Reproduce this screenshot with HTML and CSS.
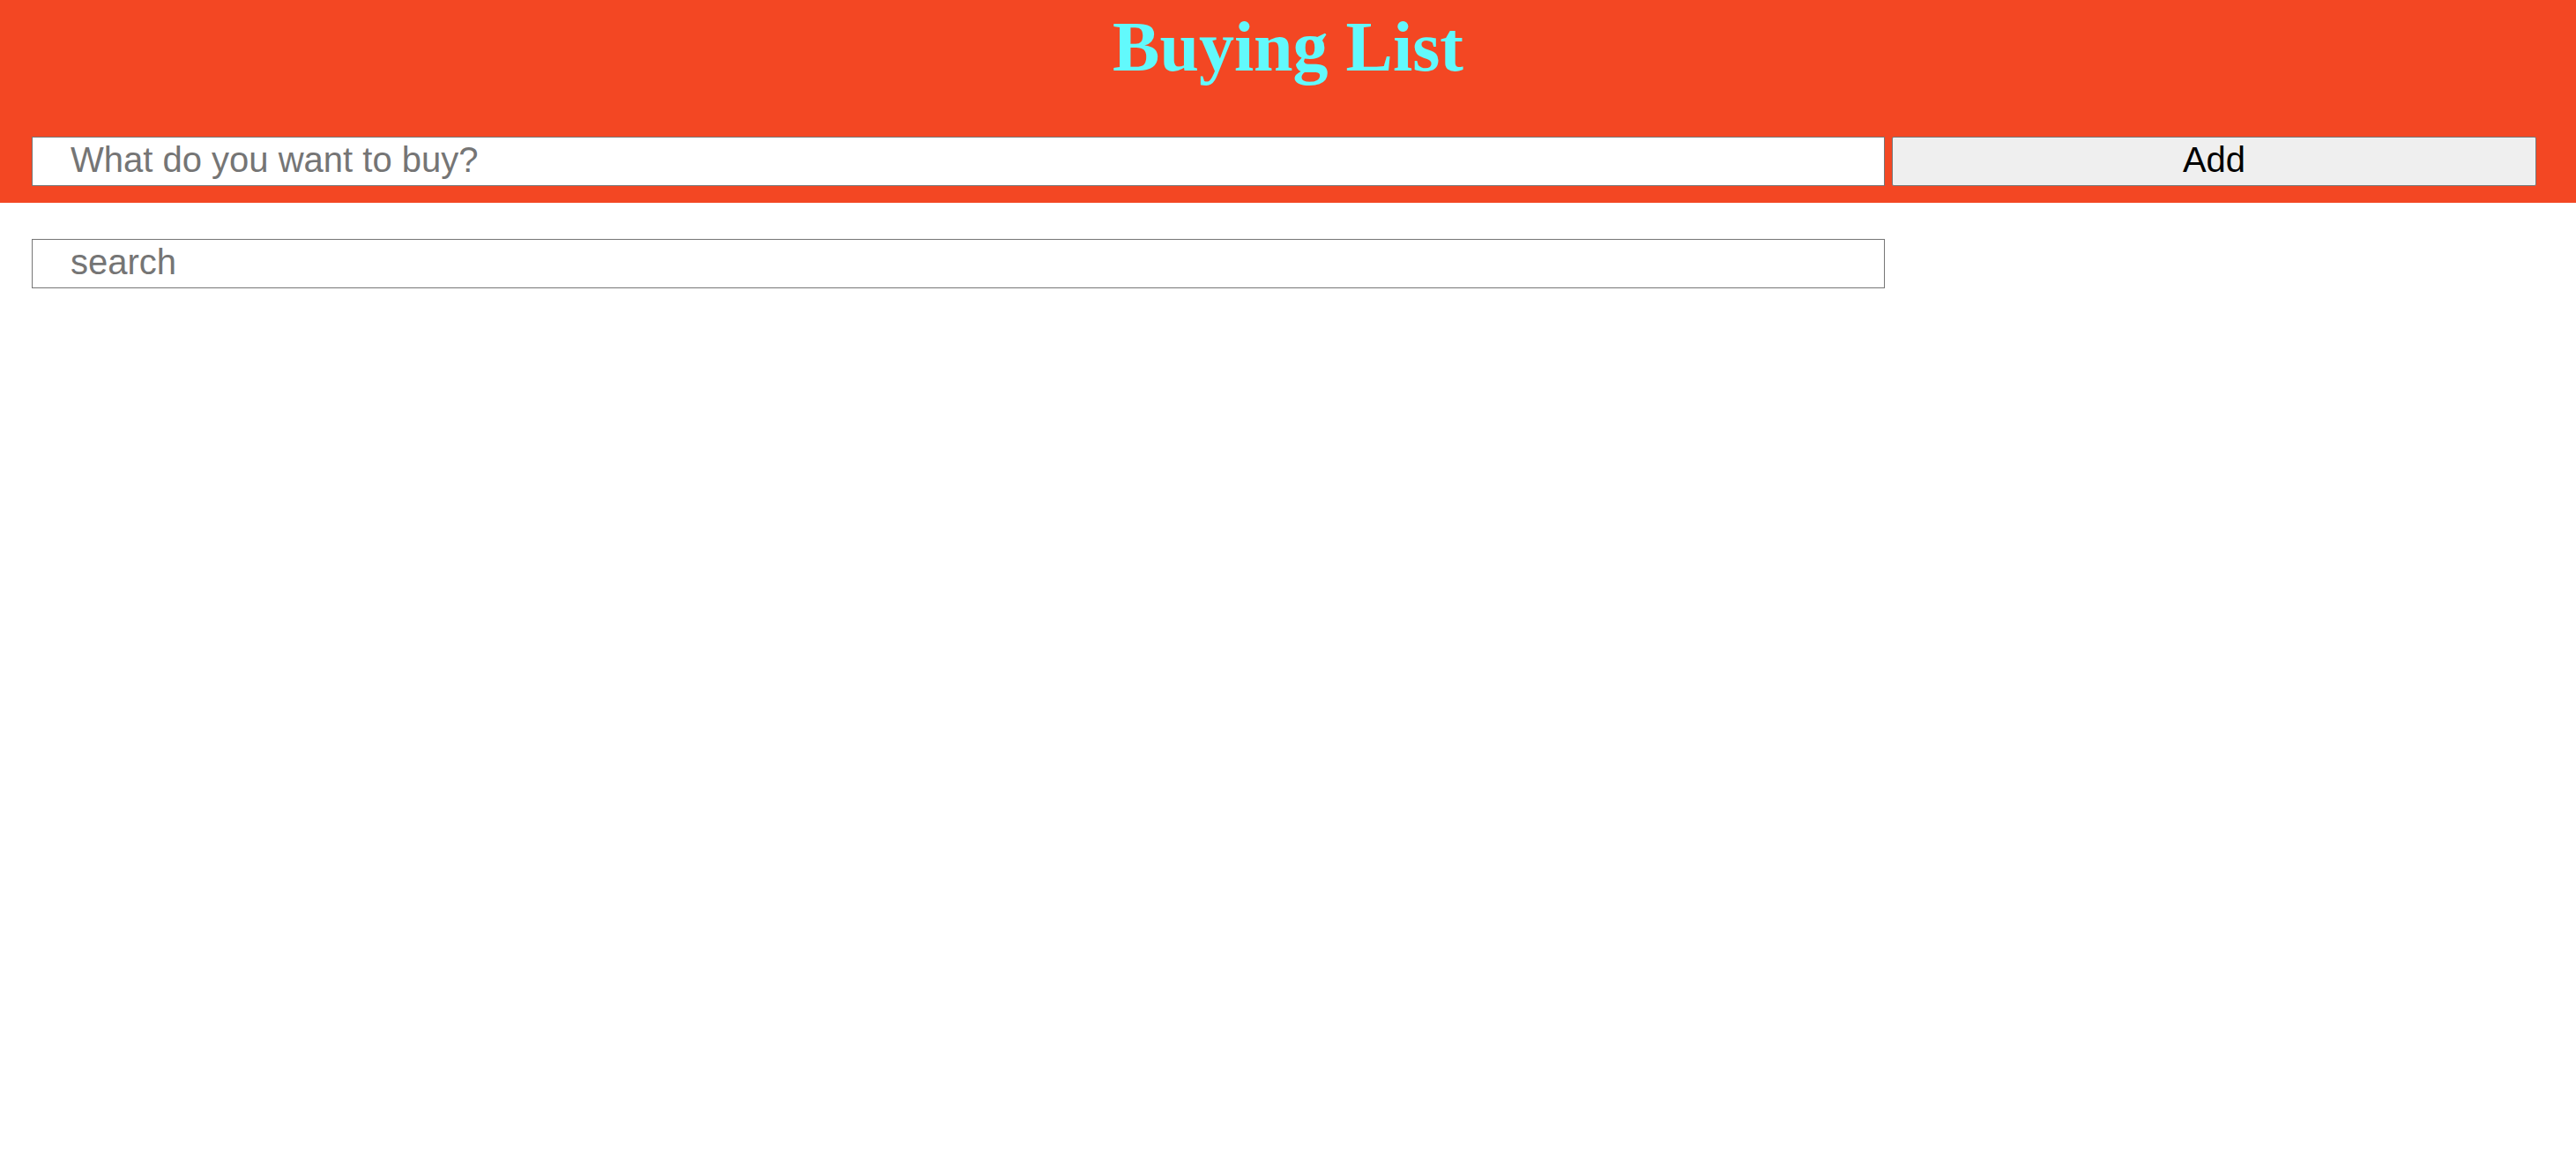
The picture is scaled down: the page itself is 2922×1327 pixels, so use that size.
FILE: index.html
```html
<!DOCTYPE html>
<html lang="en">
<head>
<meta charset="utf-8">
<title>Buying List</title>
<link rel="stylesheet" href="styles.css">
</head>
<body>
<header class="header">
  <h1 class="title">Buying List</h1>
  <form class="add-form">
    <input class="field field-add" type="text" placeholder="What do you want to buy?">
    <button class="add-btn" type="button">Add</button>
  </form>
</header>
<main class="content">
  <input class="field field-search" type="text" placeholder="search">
</main>
</body>
</html>
```
FILE: styles.css
```css
html, body {
  margin: 0;
  padding: 0;
  background: #ffffff;
}

.header {
  background: #f34723;
  height: 230px;
  box-sizing: border-box;
  padding-top: 9px;
}

.title {
  margin: 0;
  font-family: "Liberation Serif", "Times New Roman", serif;
  font-weight: bold;
  font-size: 80px;
  line-height: 88px;
  color: #62f9fc;
  text-align: center;
}

.add-form {
  display: flex;
  gap: 8px;
  margin: 58px 45px 0 36px;
}

.field {
  box-sizing: border-box;
  height: 56px;
  border: 1px solid #767676;
  border-radius: 0;
  background: #ffffff;
  padding: 0 10px 4px 43px;
  font-family: "Liberation Sans", Arial, sans-serif;
  font-size: 40px;
  color: #000;
  outline: none;
}

.field::placeholder {
  color: #757575;
  opacity: 1;
}

.field-add {
  width: 2102px;
  flex: 0 0 2102px;
}

.add-btn {
  flex: 1 1 auto;
  box-sizing: border-box;
  height: 56px;
  border: 1px solid #767676;
  border-radius: 2px;
  background: #efefef;
  font-family: "Liberation Sans", Arial, sans-serif;
  font-size: 40px;
  color: #000;
  padding: 0 0 4px 0;
}

.content {
  padding: 41px 0 0 36px;
}

.field-search {
  display: block;
  width: 2102px;
}
```
